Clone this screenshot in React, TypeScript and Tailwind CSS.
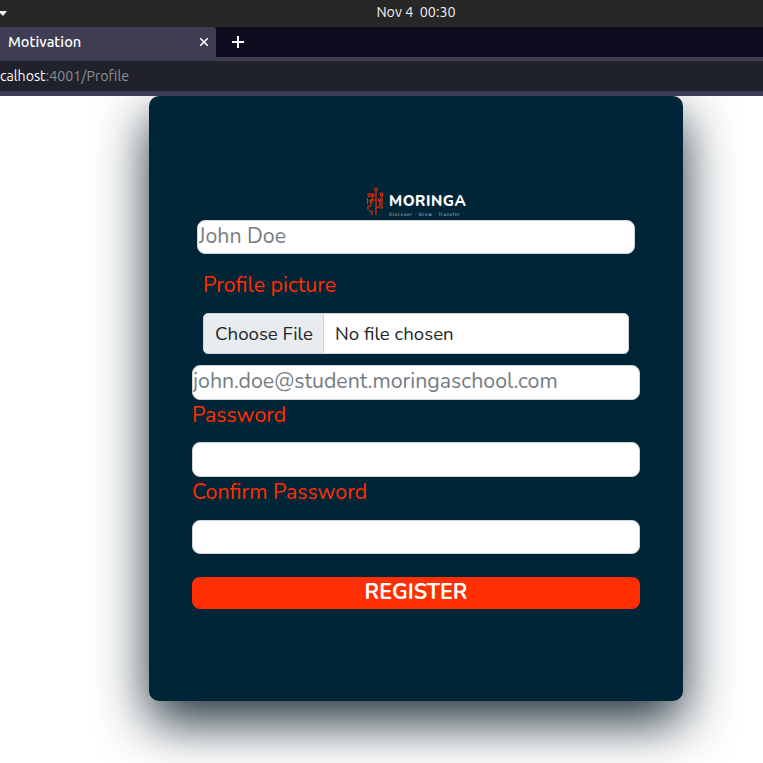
import React from "react";

const label = "block whitespace-nowrap text-[21.330px] leading-[31px] pt-[2px] text-[#ff2e00]";
const input =
  "block w-full rounded-[8px] border border-[#ced4da] bg-white p-0 text-[21.330px] text-[#212529] outline-none placeholder:text-[#757c84]";

function Logo() {
  return (
    <div className="mx-auto flex h-[30px] w-[100px] items-start gap-[4px]">
      <svg className="shrink-0" width="18" height="30" viewBox="0 0 18 30" fill="none" stroke="#e0300c" strokeWidth="1.2">
        <path d="M10 4v9M10 13H6.500V9M10 13v8M14 13v6l-4 2v7M6 28v-4H3M1.500 11v6M2 23v-4h3v-4M16 9v12h-3" />
        <circle cx="10" cy="2.500" r="1.500" />
        <circle cx="3.500" cy="8" r="1.500" />
        <circle cx="7" cy="8" r="1.200" />
        <circle cx="5" cy="14" r="1.200" />
        <circle cx="15.500" cy="7.500" r="1.400" />
        <circle cx="13.500" cy="13" r="1.200" />
      </svg>
      <div className="pt-[4px] text-white">
        <div className="whitespace-nowrap pl-px text-[15px] leading-[21px] font-extrabold tracking-[0.500px]">MORINGA</div>
        <div className="pl-px font-['DejaVu_Sans'] text-[4.500px] leading-[5px] tracking-[0.520px] whitespace-pre text-[#b4bec4]">Discover · Grow · Transfer</div>
      </div>
    </div>
  );
}

export default function App() {
  return (
    <div className="h-[763px] w-[763px] overflow-hidden bg-white font-[Nunito,Lato,sans-serif]">
      <header className="font-['Ubuntu','Noto_Sans',sans-serif]">
        <div className="relative flex h-[27px] items-center justify-center bg-[#272727] text-[14.300px] text-[#f2f2f2]">
          <svg className="absolute top-[11px] left-0" width="7" height="5" viewBox="0 0 7 5">
            <path d="M0 0h7L3 5 0 2z" fill="#f2f2f2" />
          </svg>
          <span className="ml-[69px] pb-px whitespace-pre">Nov 4  00:30</span>
        </div>
        <div className="flex h-[30px] bg-[#100a1e]">
          <div className="flex w-[216px] items-center justify-between rounded-tr-[3px] bg-[#3e3d53] pr-[7px] pl-[8px] text-white">
            <span className="text-[14.670px] font-medium">Motivation</span>
            <svg width="10" height="10" viewBox="0 0 10 10" stroke="white" strokeWidth="1.600">
              <path d="m1.200 1.200 7.600 7.600M8.800 1.200l-7.600 7.600" />
            </svg>
          </div>
          <svg className="mt-[9px] ml-[16px]" width="12" height="12" viewBox="0 0 12 12" stroke="white" strokeWidth="2">
            <path d="M6 0v12M0 6h12" />
          </svg>
        </div>
        <div className="h-[39px] border-t-4 border-b-5 border-[#3e3d53] bg-[#20222b] text-[14.200px] leading-[30px] text-[#8f9097]">
          <span className="text-[#fbfbfe]">calhost</span>:4001/Profile
        </div>
      </header>
      <main className="h-[667px] overflow-hidden">
        <form className="ml-[149px] h-[605px] w-[534px] rounded-[10px] bg-[#002536] px-[43px] pt-[91px] shadow-[0_21px_52px_rgba(0,22,32,0.88)]">
          <Logo />
          <div className="mx-[5px] pt-[3px]">
            <input className={`${input} h-[34px] pb-[3px] pl-[0.500px]`} placeholder="John Doe" />
          </div>
          <div className="mx-[11px] pt-[14px]">
            <span className={label}>Profile picture</span>
            <div className="mt-[12px] flex h-[41px] items-center overflow-hidden rounded-[5px] border border-[#ced4da] bg-white text-[18.660px] text-[#212529]">
              <span className="flex h-full w-[120px] items-center border-r border-[#ced4da] bg-[#e9ecef] pt-[2px] pl-[11px] whitespace-nowrap">Choose File</span>
              <span className="pt-[2px] pl-[11px]">No file chosen</span>
            </div>
          </div>
          <input className={`${input} mt-[11px] h-[35px] pb-[3px]`} placeholder="john.doe@student.moringaschool.com" />
          <span className={`${label} -mt-[2px]`}>Password</span>
          <input type="password" className={`${input} mt-[11px] h-[35px]`} />
          <span className={`${label} -mt-[2px]`}>Confirm Password</span>
          <input type="password" className={`${input} mt-[12px] h-[34px]`} />
          <button type="button" className="mt-[23px] block h-[32px] w-full rounded-[8px] bg-[#ff2f03] pb-[1px] text-[21.330px] leading-[31px] font-bold text-white">REGISTER</button>
        </form>
      </main>
    </div>
  );
}
